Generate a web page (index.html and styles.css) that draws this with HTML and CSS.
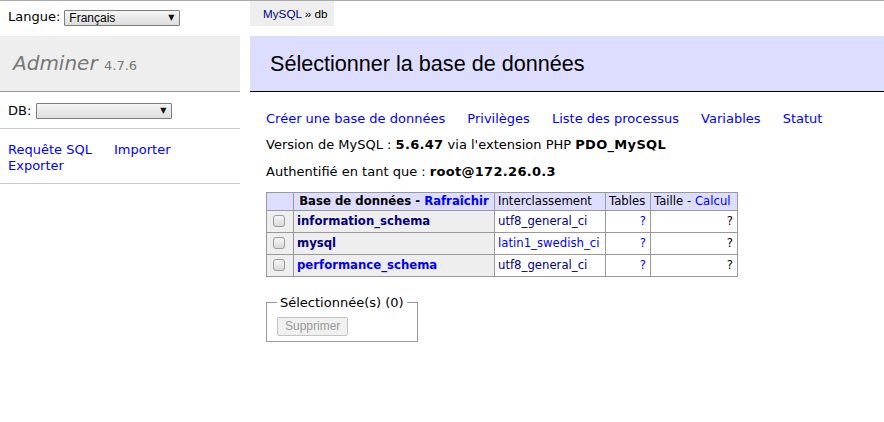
FILE: index.html
```html
<!DOCTYPE html>
<html lang="fr">
<head>
<meta charset="utf-8">
<title>Sélectionner la base de données - Adminer</title>
<link rel="stylesheet" href="styles.css">
</head>
<body>
<div class="page">
  <aside class="menu">
    <div class="lang">
      <span>Langue:</span>
      <span class="select lang-select"><select><option>Français</option></select></span>
    </div>
    <h1><a class="h1-link" href="#">Adminer</a> <span class="version">4.7.6</span></h1>
    <div class="db">
      <span>DB:</span>
      <span class="select db-select"><select><option></option></select></span>
    </div>
    <p class="side-links"><a href="#">Requête SQL</a> <a href="#">Importer</a> <a href="#">Exporter</a></p>
  </aside>
  <main class="content">
    <div class="crumb-row"><span class="breadcrumb"><a class="visited" href="#">MySQL</a> » db</span></div>
    <h2>Sélectionner la base de données</h2>
    <div class="inner">
      <p class="links"><a href="#">Créer une base de données</a> <a href="#">Privilèges</a> <a href="#">Liste des processus</a> <a href="#">Variables</a> <a href="#">Statut</a></p>
      <p class="info">Version de MySQL : <b>5.6.47</b> via l'extension PHP <b>PDO_MySQL</b></p>
      <p class="info">Authentifié en tant que : <b>root@172.26.0.3</b></p>
      <form class="db-form">
        <table class="dbs">
          <colgroup>
            <col class="c-check"><col class="c-name"><col class="c-coll"><col class="c-tables"><col class="c-size">
          </colgroup>
          <thead>
            <tr>
              <td></td>
              <th class="h-name">Base de données - <a href="#">Rafraîchir</a></th>
              <td>Interclassement</td>
              <td>Tables</td>
              <td>Taille - <a href="#">Calcul</a></td>
            </tr>
          </thead>
          <tbody>
            <tr>
              <td class="check"><input type="checkbox"></td>
              <th><a class="visited" href="#">information_schema</a></th>
              <td><a class="visited" href="#">utf8_general_ci</a></td>
              <td class="num"><a href="#">?</a></td>
              <td class="num">?</td>
            </tr>
            <tr>
              <td class="check"><input type="checkbox"></td>
              <th><a class="visited" href="#">mysql</a></th>
              <td><a href="#">latin1_swedish_ci</a></td>
              <td class="num"><a href="#">?</a></td>
              <td class="num">?</td>
            </tr>
            <tr>
              <td class="check"><input type="checkbox"></td>
              <th><a href="#">performance_schema</a></th>
              <td><a class="visited" href="#">utf8_general_ci</a></td>
              <td class="num"><a href="#">?</a></td>
              <td class="num">?</td>
            </tr>
          </tbody>
        </table>
        <div class="actions">
          <fieldset>
            <legend>Sélectionnée(s) (0)</legend>
            <button type="button" disabled>Supprimer</button>
          </fieldset>
        </div>
      </form>
    </div>
  </main>
</div>
</body>
</html>
```
FILE: styles.css
```css
* { box-sizing: border-box; }
html, body { margin: 0; padding: 0; }
body {
  border-top: 1px solid #a9a9a9;
  font: 13px/1.25 "DejaVu Sans", Verdana, sans-serif;
  color: #000;
  background: #fff;
  overflow: hidden;
}
a { color: #00f; text-decoration: none; }
a.visited { color: #000080; }

.page {
  display: grid;
  grid-template-columns: 240px 1fr;
  column-gap: 10px;
}

/* sidebar */
.lang {
  height: 35px;
  display: flex;
  align-items: center;
  gap: 4px;
  padding: 0 0 2px 8px;
}
.select {
  position: relative;
  display: inline-block;
  height: 16px;
}
.select select {
  -webkit-appearance: none;
  appearance: none;
  display: block;
  width: 100%;
  height: 16px;
  margin: 0;
  padding: 0 0 0 4px;
  border: 1px solid #7d7d7d;
  border-radius: 1px;
  background: linear-gradient(#f6f6f6, #dddddd);
  color: #000;
  font: 12px/14px "Liberation Sans", Arial, sans-serif;
}
.select::after {
  content: "▼";
  position: absolute;
  right: 6px;
  top: 3px;
  font: 8px/10px "DejaVu Sans", sans-serif;
  color: #111;
  pointer-events: none;
}
.lang-select { width: 116px; }
.db-select { width: 136px; }

h1 {
  margin: 0;
  height: 56px;
  padding: 0 13px;
  background: #eee;
  border-bottom: 1px solid #999;
  font-size: 20px;
  line-height: 55px;
  font-weight: normal;
  color: #777;
  white-space: nowrap;
}
.h1-link { color: #777; font-style: italic; }
.version { font-size: 13px; color: #777; }

.db {
  height: 37px;
  display: flex;
  align-items: center;
  gap: 5px;
  padding: 2px 0 0 8px;
  border-bottom: 1px solid #ccc;
}
.side-links {
  margin: 0;
  padding: 13px 8px 8px;
  border-bottom: 1px solid #ccc;
}
.side-links a { white-space: nowrap; margin-right: 18px; }

/* content */
.crumb-row { height: 25px; margin-bottom: 10px; }
.breadcrumb {
  display: inline-block;
  height: 25px;
  padding: 0 6px 0 13px;
  background: #eee;
  font: 11.7px/25px "Liberation Sans", Arial, sans-serif;
  white-space: nowrap;
}
h2 {
  margin: 0;
  height: 56px;
  padding: 1px 20px 0;
  background: #ddf;
  border-bottom: 1px solid #000;
  font: normal 21.6px/54px "Liberation Sans", Arial, sans-serif;
  color: #000;
}
.inner { padding-left: 16px; }
.links { margin: 19px 20px 0 0; }
.links a { white-space: nowrap; margin-right: 18px; }
.info { margin: 10px 20px 0 0; }
.info b { letter-spacing: 0.3px; }

.dbs {
  margin-top: 12px;
  border-collapse: collapse;
  table-layout: fixed;
  width: 471px;
  font-size: 11.7px;
}
.c-check { width: 27px; }
.c-name { width: 201px; }
.c-coll { width: 111px; }
.c-tables { width: 45px; }
.c-size { width: 87px; }
.dbs td, .dbs th {
  border: 1px solid #999;
  padding: 2px 4px 2px 3px;
  white-space: nowrap;
}
.dbs thead td, .dbs thead th {
  background: #ddf;
  line-height: 13px;
}
.dbs thead th { text-align: center; padding: 2px 1px; }
.dbs tbody td, .dbs tbody th { line-height: 17px; height: 22px; }
.dbs tbody th { background: #eee; text-align: left; }
.dbs td.check { background: #eee; padding: 0 0 0 6px; }
.dbs td.num { text-align: right; }
.check input {
  -webkit-appearance: none;
  appearance: none;
  display: block;
  width: 12px;
  height: 12px;
  margin: 0;
  border: 1px solid #9a9a9a;
  border-radius: 3px;
  background: linear-gradient(#f5f5f5, #d9d9d9);
}

.actions { display: flex; margin-top: 18px; }
fieldset {
  margin: 0;
  padding: 6px 10px 5px;
  border: 1px solid #999;
  min-inline-size: auto;
}
legend { padding: 0 3px; font-size: 13px; line-height: 16px; }
button {
  display: block;
  height: 19px;
  padding: 0 7px;
  border: 1px solid #c3c3c3;
  border-radius: 2px;
  background: #f0f0f0;
  color: #9a9a9a;
  font: 12px/17px "Liberation Sans", Arial, sans-serif;
}
```
